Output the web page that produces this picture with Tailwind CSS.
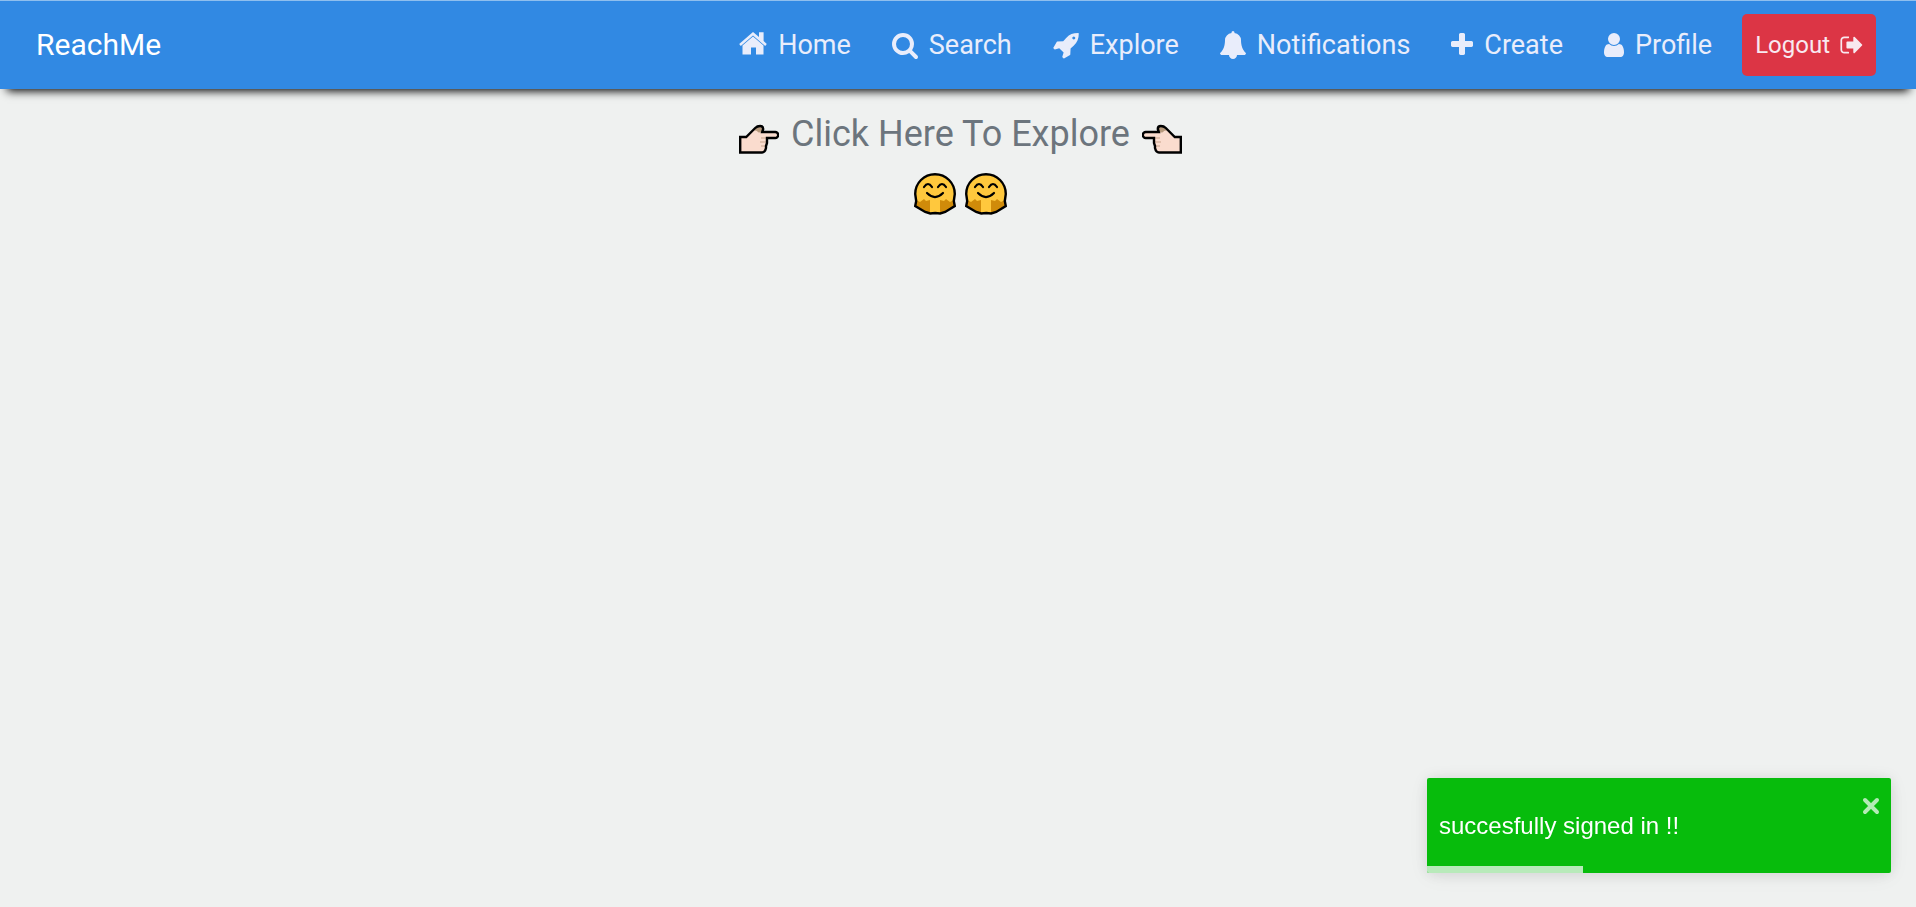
<!DOCTYPE html>
<html lang="en">
<head>
<meta charset="utf-8">
<meta name="viewport" content="width=device-width, initial-scale=1">
<title>ReachMe</title>
<script src="https://cdn.jsdelivr.net/npm/@tailwindcss/browser@4"></script>
</head>
<body class="min-h-screen bg-[#eff1f0] font-['Roboto',sans-serif]">
<svg class="hidden" aria-hidden="true">
  <symbol id="hand" viewBox="0 0 40 30">
    <path d="M1.200 28.500V13h6l9-9q2-2 5-2 3 0 3 3l-1 3h13a3 3 0 0 1 0 6H28v5l-1 3v2q-1 4.500-4 4.500Z" fill="#fadcce"/>
    <path d="M14 6l2-2q2-2 5-2 3 0 3 3l-1 2q-3 3-5 0Z" fill="#b79a7d"/>
    <path d="M22 14h6M21 18h6M22 22h5" stroke="#c9a48c" fill="none"/>
    <path d="M1.200 28.500V13h6l9-9q2-2 5-2 3 0 3 3l-1 3h13a3 3 0 0 1 0 6H28v5l-1 3v2q-1 4.500-4 4.500Z" fill="none" stroke="#000" stroke-width="2.400"/>
  </symbol>
  <symbol id="hug" viewBox="0 0 42 42">
    <path d="M21 1.200C10 1.200 1.200 9 1.200 21l1 7-1 5 10 6 5 2 5-1 5 1 5-2 10-6-1-5 1-7C40.800 9 32 1.200 21 1.200Z" fill="#ffc83d"/>
    <path d="M2 27l4 2 4-3 2 2 4-1v13l-5-1-9-6ZM40 27l-4 2-4-3-2 2-4-1v13l5-1 9-6Z" fill="#d08b0a"/>
    <path d="M21 1.200C10 1.200 1.200 10 1.200 21l1 7-1 5 10 6 5 1.500 5-.5 5 .5 5-1.500 9.600-6-1-5 1-7C40.800 10 32 1.200 21 1.200Z" fill="none" stroke="#000" stroke-width="2.400"/>
    <path d="M10 14q4-6 8 0M24 14q4-6 8 0M13 20q8 8 16 0" fill="none" stroke="#000" stroke-width="2.200" stroke-linecap="round"/>
  </symbol>
</svg>
<header class="flex h-[89px] items-center justify-between border-t border-[#8fbfee] bg-[#3189e3] pr-10 pl-9 text-[27px] text-[#e9edfb] shadow-[0_9px_9px_-7px_#000]">
  <a href="#" class="text-[30px] leading-10 text-white">ReachMe</a>
  <nav class="flex items-center gap-[30px]">
    <div class="flex items-center gap-[41px]">
      <a href="#" class="flex items-center gap-[11px]"><svg class="size-7" viewBox="0 0 28 28" fill="currentColor" aria-hidden="true"><path d="M14 1L20 6V1.200h4.600V10l3.200 3-1.600 2L14 4.400 1.800 15 .2 13Z"/><path d="M14 5.400l10.500 9.100v9H17v-7h-5v7H3.500v-9Z"/></svg>Home</a>
      <a href="#" class="flex items-center gap-[11px]"><svg class="h-7 w-[26px]" viewBox="64 0 1664 1792" fill="currentColor" aria-hidden="true"><path d="M1216 832q0-185-131.500-316.500t-316.500-131.500-316.500 131.500-131.500 316.500 131.500 316.500 316.500 131.500 316.500-131.500 131.500-316.500zm512 832q0 52-38 90t-90 38q-54 0-90-38l-343-342q-179 124-399 124-143 0-273.500-55.500t-225-150-150-225-55.500-273.500 55.500-273.500 150-225 225-150 273.500-55.500 273.500 55.500 225 150 150 225 55.500 273.500q0 220-124 399l343 343q37 37 37 90z"/></svg>Search</a>
      <a href="#" class="flex items-center gap-[11px]"><svg class="h-7 w-[26px]" viewBox="14 0 1664 1792" fill="currentColor" aria-hidden="true"><path d="M1440 448q0-40-28-68t-68-28-68 28-28 68 28 68 68 28 68-28 28-68zm224-288q0 249-75.500 430.500t-253.500 360.500q-81 80-195 176l-20 379q-2 16-16 26l-384 224q-7 4-16 4-12 0-23-9l-64-64q-13-14-8-32l85-276-281-281-276 85q-3 1-9 1-14 0-23-9l-64-64q-17-19-5-39l224-384q10-14 26-16l379-20q96-114 176-195 188-187 358-258t431-71q14 0 24 9.500t10 22.500z"/></svg>Explore</a>
      <a href="#" class="flex items-center gap-[11px]"><svg class="h-7 w-[26px]" viewBox="64 0 1664 1792" fill="currentColor" aria-hidden="true"><path d="M1728 1408q0 52-38 90t-90 38h-448q0 106-75 181t-181 75-181-75-75-181h-448q-52 0-90-38t-38-90q50-42 91-88t85-119.500 74.500-158.500 50-206 19.500-260q0-152 117-282.500t307-158.500q-8-19-8-39 0-40 28-68t68-28 68 28 28 68q0 20-8 39 190 28 307 158.500t117 282.500q0 139 19.500 260t50 206 74.500 158.500 85 119.500 91 88z"/></svg>Notifications</a>
      <a href="#" class="flex items-center gap-[11px]"><svg class="h-7 w-[22px]" viewBox="192 0 1408 1792" fill="currentColor" aria-hidden="true"><path d="M1600 736v192q0 40-28 68t-68 28h-416v416q0 40-28 68t-68 28h-192q-40 0-68-28t-28-68v-416h-416q-40 0-68-28t-28-68v-192q0-40 28-68t68-28h416v-416q0-40 28-68t68-28h192q40 0 68 28t28 68v416h416q40 0 68 28t28 68z"/></svg>Create</a>
      <a href="#" class="flex items-center gap-[11px]"><svg class="h-7 w-5" viewBox="256 0 1280 1792" fill="currentColor" aria-hidden="true"><path d="M1536 1399q0 109-62.500 187t-150.500 78h-854q-88 0-150.500-78t-62.500-187q0-85 8.500-160.500t31.500-152 58.500-131 94-89 134.500-34.500q131 128 313 128t313-128q76 0 134.500 34.500t94 89 58.500 131 31.500 152 8.500 160.500zm-256-887q0 159-112.500 271.500t-271.500 112.500-271.500-112.500-112.500-271.500 112.500-271.500 271.500-112.500 271.500 112.500 112.500 271.500z"/></svg>Profile</a>
    </div>
    <button type="button" class="flex items-center gap-[10px] rounded-[5px] bg-[#dc3545] px-[13px] py-[13px] text-2xl leading-9 text-[#f8e9f0]">Logout<svg class="h-6 w-[23px]" viewBox="0 0 1717 1792" fill="currentColor" aria-hidden="true"><path transform="translate(32)" d="M640 1440q0 4 1 20t.5 26.500-3 23.500-10 19.500-20.500 6.500h-320q-119 0-203.500-84.500t-84.500-203.500v-704q0-119 84.500-203.500t203.500-84.500h320q13 0 22.500 9.500t9.500 22.500q0 4 1 20t.5 26.500-3 23.500-10 19.500-20.500 6.500h-320q-66 0-113 47t-47 113v704q0 66 47 113t113 47h312l11.500 1 11.500 3 8 5.500 7 9 2 13.500zm992-544q0 26-19 45l-544 544q-19 19-45 19t-45-19-19-45v-288h-448q-26 0-45-19t-19-45v-384q0-26 19-45t45-19h448v-288q0-26 19-45t45-19 45 19l544 544q19 19 19 45z"/></svg></button>
  </nav>
</header>
<main class="flex flex-col items-center pt-[18px] pl-[5px]">
  <a href="#" class="flex items-end gap-3 text-4xl leading-[54px] text-[#6c757d]">
    <svg class="mb-[7px] h-[30px] w-10" role="img" aria-label="Hand pointing right"><use href="#hand"/></svg>
    Click Here To Explore
    <svg class="mb-[7px] h-[30px] w-10 -scale-x-100" role="img" aria-label="Hand pointing left"><use href="#hand"/></svg>
  </a>
  <div class="mt-3 flex gap-[9px]">
    <svg class="size-[42px]" role="img" aria-label="Hugging face"><use href="#hug"/></svg>
    <svg class="size-[42px]" role="img" aria-label="Hugging face"><use href="#hug"/></svg>
  </div>
</main>
<div role="status" class="fixed right-[25px] bottom-[34px] flex w-[464px] items-center overflow-hidden rounded-xs bg-[#07bc0c] py-[29px] pl-3 font-['Liberation_Sans',Arial,sans-serif] text-2xl leading-[37px] text-white shadow-[0_1px_15px_rgba(0,0,0,0.1),0_3px_22px_rgba(0,0,0,0.05)]">
  succesfully signed in !!
  <button type="button" aria-label="Close" class="absolute top-[19px] right-[11px] text-[#b4ebb6]"><svg class="size-[18px]" viewBox="0 0 18 18" fill="none" stroke="currentColor" stroke-width="4" stroke-linecap="round"><path d="M3 3l12 12M15 3L3 15"/></svg></button>
  <div class="absolute bottom-0 left-0 h-[7px] bg-[#b8eaba]" style="width:156px"></div>
</div>
</body>
</html>
